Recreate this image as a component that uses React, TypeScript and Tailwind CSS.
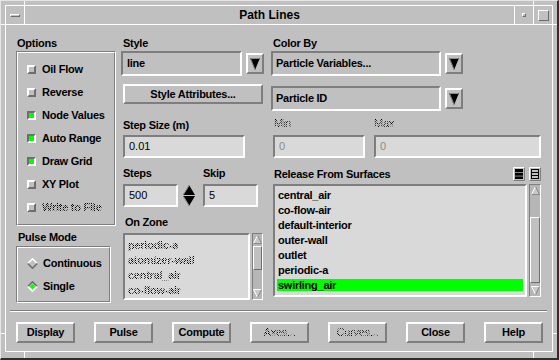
import React from "react";

const F = "font-['Liberation_Sans',Arial,sans-serif]";
const RAISED = "border-2 border-t-white border-l-white border-r-[#7e7e7e] border-b-[#7e7e7e]";
const SUNKEN = "border-2 border-t-[#7e7e7e] border-l-[#7e7e7e] border-r-white border-b-white";
const LBL = "h-[13px] leading-[13px] text-[11px] font-bold tracking-[-0.25px] whitespace-nowrap text-black";
const STIP =
  "text-transparent bg-clip-text bg-[image:repeating-conic-gradient(#000_0_25%,transparent_0_50%)] bg-[length:2px_2px]";
const MONO = "font-['Liberation_Sans',Arial,sans-serif] text-[11px] font-normal";

function Check({ on }: { on?: boolean }) {
  return (
    <div
      className={
        on
          ? "w-[9px] h-[9px] shrink-0 border-2 border-t-[#6e6e6e] border-l-[#6e6e6e] border-r-white border-b-white bg-[#00ff00]"
          : "w-[9px] h-[9px] shrink-0 border-2 border-t-white border-l-white border-r-[#6e6e6e] border-b-[#6e6e6e] bg-[#c0c0c0]"
      }
    />
  );
}

function Diamond({ on }: { on?: boolean }) {
  return (
    <svg width="11" height="11" viewBox="0 0 11 11" className="shrink-0">
      <polygon points="5.5,0.5 10.5,5.5 5.5,10.5 0.5,5.5" fill="#c0c0c0" />
      <polyline points="0.8,5.5 5.5,0.8 10.2,5.5" fill="none" stroke={on ? "#6e6e6e" : "#ffffff"} strokeWidth="1.6" />
      <polyline points="0.8,5.5 5.5,10.2 10.2,5.5" fill="none" stroke={on ? "#ffffff" : "#6e6e6e"} strokeWidth="1.6" />
      {on && <polygon points="5.5,3 8,5.5 5.5,8 3,5.5" fill="#00ff00" />}
    </svg>
  );
}

function DropArrow() {
  return (
    <div className={`w-[18px] h-[21px] shrink-0 ${RAISED} bg-[#c0c0c0] flex items-center justify-center`}>
      <svg width="10" height="12" viewBox="0 0 10 12">
        <polygon points="0,0 10,0 5,12" fill="#000" />
        <polyline points="0.5,0.5 5,11.5" stroke="#8a8a8a" strokeWidth="1" fill="none" />
        <polyline points="0.5,0.5 9.5,0.5" stroke="#8a8a8a" strokeWidth="1" fill="none" />
      </svg>
    </div>
  );
}

function Spinner() {
  return (
    <div className="w-[12px] h-[23px] flex flex-col items-center justify-between py-[1px]">
      <svg width="12" height="10" viewBox="0 0 12 10">
        <polygon points="6,0 12,10 0,10" fill="#000" />
        <polyline points="0.5,9.5 6,0.5" stroke="#9a9a9a" fill="none" />
      </svg>
      <svg width="12" height="10" viewBox="0 0 12 10">
        <polygon points="0,0 12,0 6,10" fill="#000" />
        <polyline points="0.5,0.5 6,9.5" stroke="#9a9a9a" fill="none" />
      </svg>
    </div>
  );
}

function ScrollArrow({ up }: { up?: boolean }) {
  return up ? (
    <svg width="9" height="9" viewBox="0 0 9 9">
      <polygon points="4.5,0.5 8.5,8.5 0.5,8.5" fill="#c8c8c8" />
      <polyline points="0.5,8.5 4.5,0.5" stroke="#ffffff" fill="none" />
      <polyline points="4.5,0.5 8.5,8.5 0.5,8.5" stroke="#8a8a8a" fill="none" />
    </svg>
  ) : (
    <svg width="9" height="9" viewBox="0 0 9 9">
      <polygon points="0.5,0.5 8.5,0.5 4.5,8.5" fill="#c8c8c8" />
      <polyline points="4.5,8.5 0.5,0.5 8.5,0.5" stroke="#ffffff" fill="none" />
      <polyline points="8.5,0.5 4.5,8.5" stroke="#8a8a8a" fill="none" />
    </svg>
  );
}

function Scroll({ outer, slider }: { outer: string; slider: string }) {
  return (
    <div
      className={`${outer} shrink-0 border border-t-[#7e7e7e] border-l-[#7e7e7e] border-r-white border-b-white bg-[#b6b6b6] flex flex-col items-center py-[1px]`}
    >
      <ScrollArrow up />
      <div className={`${slider} w-full border border-t-white border-l-white border-r-[#6e6e6e] border-b-[#6e6e6e] bg-[#c0c0c0]`} />
      <div className="mt-auto flex">
        <ScrollArrow />
      </div>
    </div>
  );
}

function SelectAllIcon() {
  return (
    <svg width="12" height="14" viewBox="0 0 12 14">
      <rect x="0" y="0" width="12" height="14" fill="#c0c0c0" />
      <polyline points="0.5,13.5 0.5,0.5 11.5,0.5" stroke="#ffffff" fill="none" />
      <polyline points="11.5,0.5 11.5,13.5 0.5,13.5" stroke="#7e7e7e" fill="none" />
      <rect x="2" y="2" width="8" height="3" fill="#000" />
      <rect x="2" y="5.7" width="8" height="3" fill="#000" />
      <rect x="2" y="9.4" width="8" height="2.6" fill="#000" />
    </svg>
  );
}

function DeselectIcon() {
  return (
    <svg width="12" height="14" viewBox="0 0 12 14">
      <rect x="0" y="0" width="12" height="14" fill="#c0c0c0" />
      <polyline points="0.5,13.5 0.5,0.5 11.5,0.5" stroke="#ffffff" fill="none" />
      <polyline points="11.5,0.5 11.5,13.5 0.5,13.5" stroke="#7e7e7e" fill="none" />
      <rect x="2.5" y="2.5" width="7" height="9" fill="none" stroke="#000" />
      <line x1="2.5" y1="5.5" x2="9.5" y2="5.5" stroke="#000" />
      <line x1="2.5" y1="8.5" x2="9.5" y2="8.5" stroke="#000" />
    </svg>
  );
}

function OptRow({ label, on, disabled }: { label: string; on?: boolean; disabled?: boolean }) {
  return (
    <div className="h-[13px] flex items-center pl-[9px] gap-[6px]">
      <Check on={on} />
      <span className={`${LBL} ${disabled ? STIP : ""}`}>{label}</span>
    </div>
  );
}

export default function App() {
  const releaseItems = [
    "central_air",
    "co-flow-air",
    "default-interior",
    "outer-wall",
    "outlet",
    "periodic-a",
    "swirling_air",
  ];
  const zoneItems = ["periodic-a", "atomizer-wall", "central_air", "co-flow-air"];
  const buttons: [string, boolean][] = [
    ["Display", false],
    ["Pulse", false],
    ["Compute", false],
    ["Axes...", true],
    ["Curves...", true],
    ["Close", false],
    ["Help", false],
  ];

  return (
    <div
      className={`${F} relative w-[559px] h-[360px] bg-[#c0c0c0] border-t border-l border-t-[#e6e6e6] border-l-[#e6e6e6] border-r-2 border-b-2 border-r-[#2e2e2e] border-b-[#2e2e2e] pt-[4px] pl-[4px] pr-[4px] pb-[6px] flex flex-col overflow-hidden`}
    >
      {/* frame corner marks */}
      <div className="absolute left-[23px] top-0 w-px h-[4px] bg-white" />
      <div className="absolute left-[532px] top-0 w-px h-[4px] bg-white" />
      <div className="absolute left-0 top-[23px] w-[4px] h-px bg-white" />
      <div className="absolute right-0 top-[23px] w-[4px] h-px bg-white" />
      <div className="absolute left-[23px] bottom-0 w-px h-[6px] bg-white" />
      <div className="absolute left-[532px] bottom-0 w-px h-[6px] bg-white" />
      <div className="absolute left-0 top-[332px] w-[4px] h-px bg-white" />
      <div className="absolute right-0 top-[332px] w-[4px] h-px bg-white" />

      {/* title bar */}
      <div className="h-[19px] shrink-0 flex border-t border-r border-white">
        <div className="w-[19px] border-l border-white flex items-center justify-center">
          <div className="w-[10px] h-[3px] border-t border-l border-white border-b border-r border-b-[#6e6e6e] border-r-[#6e6e6e] bg-[#c0c0c0]" />
        </div>
        <div className="w-[490px] border-l border-white flex items-center justify-center">
          <span className="text-[12px] font-bold text-black leading-[14px]">Path Lines</span>
        </div>
        <div className="w-[19px] border-l border-white flex items-center justify-center">
          <div className="w-[4px] h-[4px] border-t border-l border-white border-b border-r border-b-[#6e6e6e] border-r-[#6e6e6e]" />
        </div>
        <div className="w-[19px] border-l border-white flex items-center justify-center">
          <div className="w-[11px] h-[11px] border-t border-l border-white border-b border-r border-b-[#6e6e6e] border-r-[#6e6e6e]" />
        </div>
      </div>

      {/* client */}
      <div className="flex-1 border border-white flex flex-col">
        <div className="h-[285px] shrink-0 flex pt-[12px] pl-[10px]">
          {/* left column */}
          <div className="w-[100px] flex flex-col">
            <div className={`${LBL} pl-[1px]`}>Options</div>
            <div className="mt-[1px] h-[175px] w-[100px] border border-t-[#7e7e7e] border-l-[#7e7e7e] border-r-white border-b-white">
              <div className="h-full border border-t-white border-l-white border-r-[#7e7e7e] border-b-[#7e7e7e] flex flex-col pt-[10px] gap-[10px]">
                <OptRow label="Oil Flow" />
                <OptRow label="Reverse" />
                <OptRow label="Node Values" on />
                <OptRow label="Auto Range" on />
                <OptRow label="Draw Grid" on />
                <OptRow label="XY Plot" />
                <OptRow label="Write to File" disabled />
              </div>
            </div>
            <div className={`${LBL} mt-[5px] pl-[2px]`}>Pulse Mode</div>
            <div className="mt-[2px] h-[57px] w-[95px] border border-t-[#7e7e7e] border-l-[#7e7e7e] border-r-white border-b-white">
              <div className="h-full border border-t-white border-l-white border-r-[#7e7e7e] border-b-[#7e7e7e] flex flex-col pt-[9px] gap-[10px]">
                <div className="h-[13px] flex items-center pl-[9px] gap-[5px]">
                  <Diamond />
                  <span className={LBL}>Continuous</span>
                </div>
                <div className="h-[13px] flex items-center pl-[9px] gap-[5px]">
                  <Diamond on />
                  <span className={LBL}>Single</span>
                </div>
              </div>
            </div>
          </div>

          {/* middle column */}
          <div className="ml-[5px] w-[143px] flex flex-col">
            <div className={`${LBL} pl-[2px]`}>Style</div>
            <div className="mt-[1px] h-[25px] flex items-center">
              <div className={`w-[122px] h-[25px] ${SUNKEN} bg-[#c0c0c0] flex items-center pl-[4px]`}>
                <span className={LBL}>line</span>
              </div>
              <div className="ml-[4px]">
                <DropArrow />
              </div>
            </div>
            <div className={`mt-[8px] ml-[2px] w-[140px] h-[20px] ${RAISED} bg-[#c0c0c0] flex items-center justify-center`}>
              <span className={LBL}>Style Attributes...</span>
            </div>
            <div className={`${LBL} mt-[15px] pl-[2px]`}>Step Size (m)</div>
            <div className={`mt-[3px] ml-[2px] w-[122px] h-[23px] ${SUNKEN} bg-[#d9d9d9] flex items-center pl-[4px]`}>
              <span className={`${MONO} text-black`}>0.01</span>
            </div>
            <div className="mt-[9px] h-[13px] flex">
              <div className={`${LBL} pl-[2px] w-[82px]`}>Steps</div>
              <div className={LBL}>Skip</div>
            </div>
            <div className="mt-[4px] ml-[2px] h-[23px] flex items-center">
              <div className={`w-[55px] h-[23px] ${SUNKEN} bg-[#d9d9d9] flex items-center pl-[4px]`}>
                <span className={`${MONO} text-black`}>500</span>
              </div>
              <div className="ml-[5px]">
                <Spinner />
              </div>
              <div className={`ml-[8px] w-[55px] h-[23px] ${SUNKEN} bg-[#d9d9d9] flex items-center pl-[4px]`}>
                <span className={`${MONO} text-black`}>5</span>
              </div>
            </div>
            <div className={`${LBL} mt-[9px] pl-[4px]`}>On Zone</div>
            <div className="mt-[4px] ml-[2px] flex">
              <div className={`w-[127px] h-[67px] ${SUNKEN} bg-[#d9d9d9] pt-[4px] px-[2px] overflow-hidden`}>
                {zoneItems.map((z) => (
                  <div key={z} className="h-[12px] mb-[3px] pl-[1px] flex items-center">
                    <span className={`${LBL} leading-[12px] h-[12px] ${STIP}`}>{z}</span>
                  </div>
                ))}
              </div>
              <div className="ml-[2px]">
                <Scroll outer="w-[11px] h-[67px]" slider="mt-[2px] h-[24px]" />
              </div>
            </div>
          </div>

          {/* right column */}
          <div className="ml-[7px] w-[270px] flex flex-col">
            <div className={`${LBL} pl-[2px]`}>Color By</div>
            <div className="mt-[1px] h-[25px] flex items-center">
              <div className={`w-[170px] h-[25px] ${SUNKEN} bg-[#c0c0c0] flex items-center pl-[3px]`}>
                <span className={LBL}>Particle Variables...</span>
              </div>
              <div className="ml-[4px]">
                <DropArrow />
              </div>
            </div>
            <div className="mt-[10px] h-[25px] flex items-center">
              <div className={`w-[170px] h-[25px] ${SUNKEN} bg-[#c0c0c0] flex items-center pl-[3px]`}>
                <span className={LBL}>Particle ID</span>
              </div>
              <div className="ml-[4px]">
                <DropArrow />
              </div>
            </div>
            <div className="mt-[6px] h-[13px] flex">
              <div className={`${LBL} pl-[3px] w-[103px] font-normal`}>
                <span className={STIP}>Min</span>
              </div>
              <div className={`${LBL} font-normal`}>
                <span className={STIP}>Max</span>
              </div>
            </div>
            <div className="mt-[5px] h-[23px] flex">
              <div className={`ml-[2px] w-[92px] h-[23px] ${SUNKEN} bg-[#d9d9d9] flex items-center pl-[4px]`}>
                <span className={`${MONO} text-[#8a8a8a]`}>0</span>
              </div>
              <div className={`ml-[9px] w-[167px] h-[23px] ${SUNKEN} bg-[#d9d9d9] flex items-center pl-[4px]`}>
                <span className={`${MONO} text-[#8a8a8a]`}>0</span>
              </div>
            </div>
            <div className="mt-[9px] h-[14px] flex items-center justify-between">
              <div className={`${LBL} pl-[3px]`}>Release From Surfaces</div>
              <div className="flex gap-[4px]">
                <SelectAllIcon />
                <DeselectIcon />
              </div>
            </div>
            <div className="mt-[3px] ml-[2px] flex">
              <div className={`w-[254px] h-[113px] ${SUNKEN} bg-[#d9d9d9] pt-[3px] px-[2px] overflow-hidden`}>
                {releaseItems.map((r) => (
                  <div
                    key={r}
                    className={`h-[12px] mb-[3px] pl-[1px] flex items-center ${r === "swirling_air" ? "bg-[#00ff00]" : ""}`}
                  >
                    <span className={`${LBL} leading-[12px] h-[12px]`}>{r}</span>
                  </div>
                ))}
              </div>
              <div className="ml-[2px]">
                <Scroll outer="w-[12px] h-[113px]" slider="mt-[22px] h-[66px]" />
              </div>
            </div>
          </div>
        </div>

        {/* separator */}
        <div className="ml-[4px] mr-[5px] h-[2px] border-t border-b border-t-[#7e7e7e] border-b-white" />

        {/* buttons */}
        <div className="mt-[10px] pl-[10px] flex gap-[19px]">
          {buttons.map(([b, dis]) => (
            <div key={b} className={`w-[59px] h-[21px] ${RAISED} bg-[#c0c0c0] flex items-center justify-center`}>
              <span className={`${LBL} ${dis ? STIP + " font-normal" : ""}`}>{b}</span>
            </div>
          ))}
        </div>
      </div>
    </div>
  );
}
